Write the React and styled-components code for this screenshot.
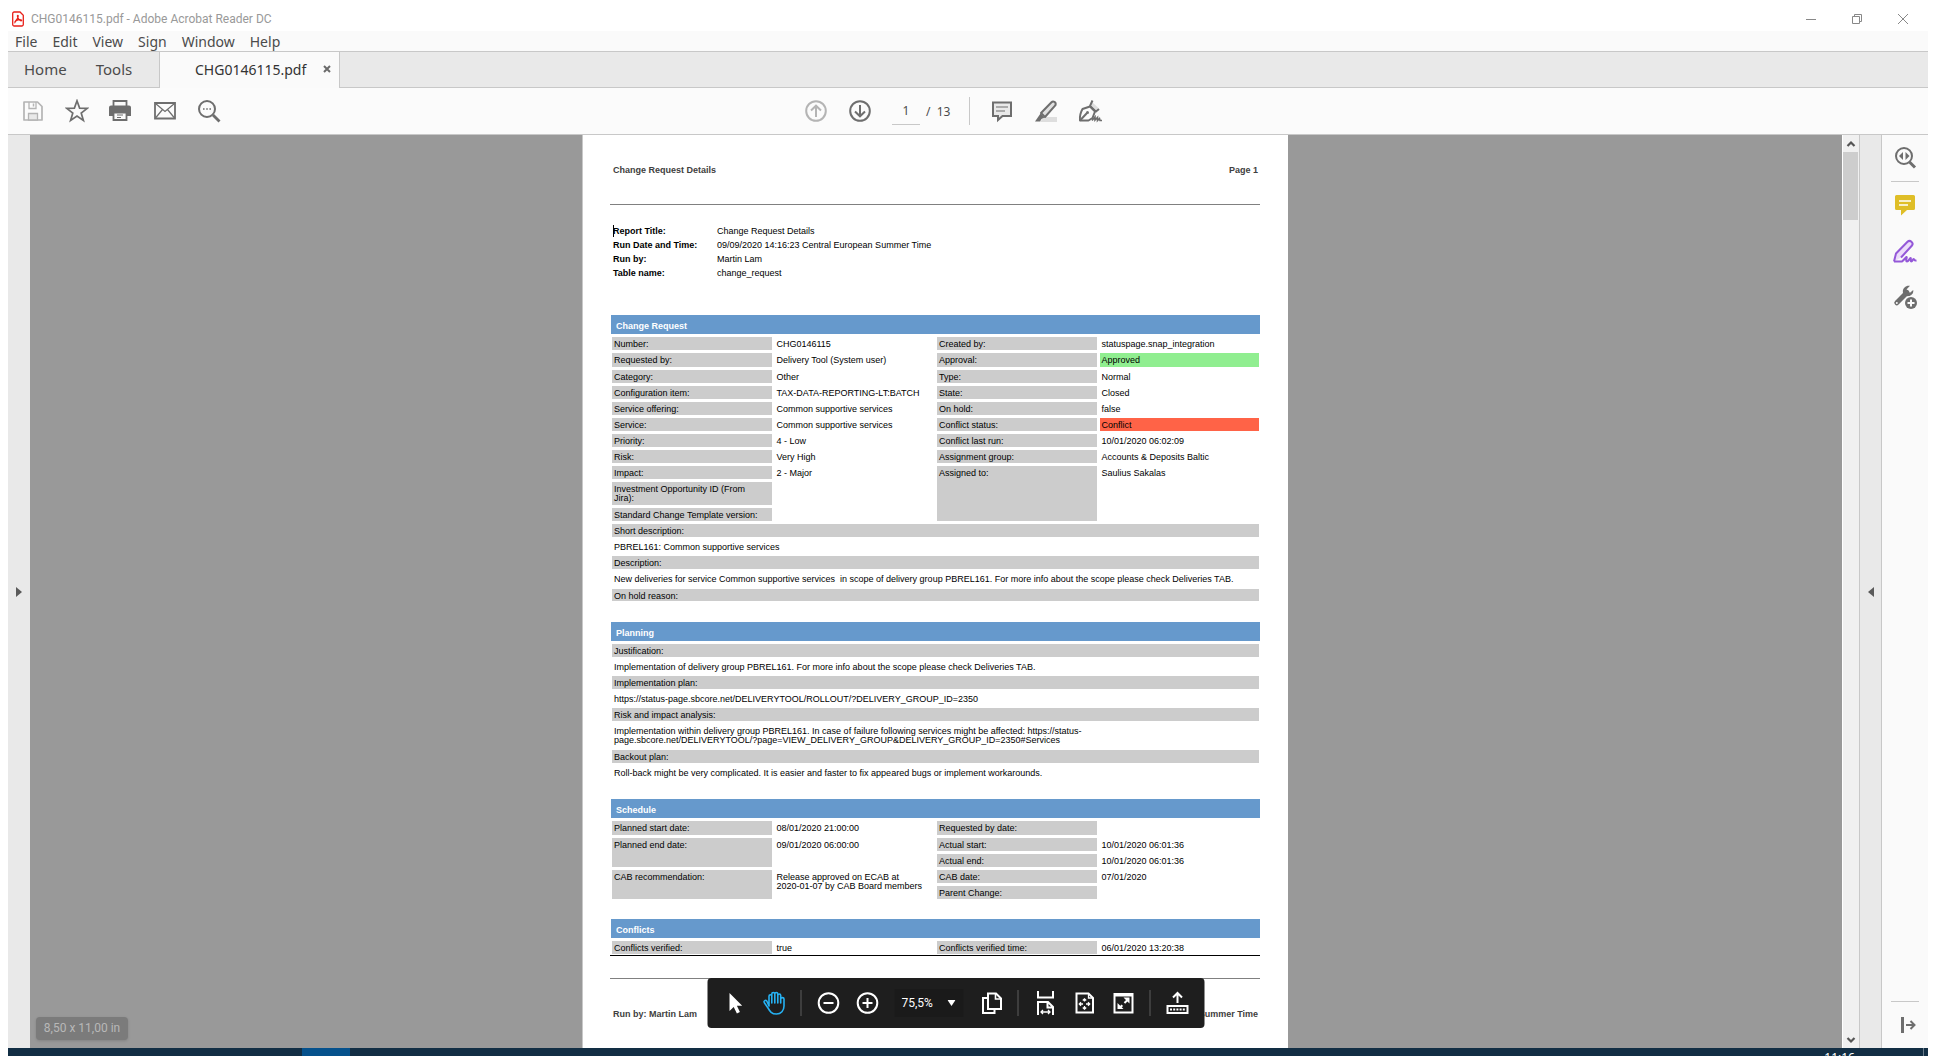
import React from "react";
import styled, { createGlobalStyle } from "styled-components";

const UI = `"Noto Sans", "Open Sans", sans-serif`;
const DOC = `"Liberation Sans", Arial, sans-serif`;
const LINE = "#c8c8c8";
const ICON = "#6e6e6e";

const GlobalStyle = createGlobalStyle`
  *, *::before, *::after { box-sizing: border-box; }
  html, body { margin: 0; background: #fff; }
  body { font-family: ${UI}; }
  button, input, select { font: inherit; color: inherit; }
`;

const Shell = styled.div`
  display: flex;
  flex-direction: column;
  height: 100vh;
  padding: 0 8px;
  overflow: hidden;
`;

const PlainButton = styled.button`
  display: flex;
  align-items: center;
  justify-content: center;
  padding: 0;
  border: 0;
  background: none;
  cursor: pointer;
`;

/* ---------- window chrome ---------- */

const TitleBar = styled.header`
  display: flex;
  align-items: center;
  flex: none;
  height: 31px;
  padding: 6px 2px 0 4px;
  color: #999;
`;

const WindowTitle = styled.h1`
  flex: 1;
  margin: 0 0 0 7px;
  font-family: Roboto, "Open Sans", sans-serif;
  font-size: 12px;
  line-height: 18px;
  font-weight: 400;
`;

const WindowButton = styled(PlainButton)`
  width: 46px;
  height: 24px;
`;

const MenuBar = styled.nav`
  display: flex;
  flex: none;
  gap: 15px;
  height: 21px;
  padding: 1px 7px 0;
  background: #fafafa;
  border-bottom: 1px solid ${LINE};
`;

const MenuItem = styled(PlainButton)`
  font-size: 14px;
  line-height: 20px;
  color: #4b4b4b;
`;

const TabBar = styled.nav`
  display: flex;
  flex: none;
  height: 36px;
  background: #e9e9e9;
`;

const AppTabs = styled.div`
  display: flex;
  gap: 29px;
  width: 152px;
  padding: 0 0 2px 16px;
  border-right: 1px solid ${LINE};
  border-bottom: 1px solid ${LINE};
`;

const AppTab = styled(PlainButton)`
  font-size: 15px;
  color: #4b4b4b;
`;

const DocumentTab = styled.div`
  display: flex;
  align-items: center;
  justify-content: space-between;
  width: 180px;
  padding: 0 8px 2px 35px;
  background: #fafafa;
  border-right: 1px solid ${LINE};
`;

const DocumentTabName = styled(PlainButton)`
  font-size: 14px;
  color: #333;
`;

const TabFiller = styled.div`
  flex: 1;
  border-bottom: 1px solid ${LINE};
`;

/* ---------- toolbar ---------- */

const Toolbar = styled.div`
  display: grid;
  grid-template-columns: 1fr auto 1fr;
  flex: none;
  height: 47px;
  background: #fbfbfb;
  border-bottom: 1px solid ${LINE};
`;

const FileTools = styled.div`
  display: flex;
  align-items: center;
  padding-left: 3px;
`;

const CenterTools = styled.div`
  display: grid;
  grid-template-columns: 175px 173px;
  align-items: center;
`;

const ToolGroup = styled.div`
  display: flex;
  align-items: center;
`;

const MarkupGroup = styled(ToolGroup)`
  height: 28px;
  padding-left: 10px;
  border-left: 1px solid ${LINE};
`;

const ToolButton = styled(PlainButton)`
  width: 44px;
  height: 40px;
  color: ${(p) => (p.disabled ? "#b4b4b4" : ICON)};
`;

const PageInput = styled.input`
  width: 28px;
  height: 28px;
  margin: 0 6px 0 10px;
  padding: 0;
  border: 0;
  border-bottom: 1px solid ${LINE};
  background: none;
  text-align: center;
  font-size: 12px;
  color: #4b4b4b;
`;

const PageTotal = styled.span`
  font-size: 12px;
  color: #4b4b4b;
  white-space: pre;
`;

/* ---------- body ---------- */

const Body = styled.div`
  display: flex;
  flex: 1;
  min-height: 0;
`;

const Gutter = styled(PlainButton)`
  flex: none;
  width: 22px;
  background: #e9e9e9;
  border-left: ${(p) => (p.$lined ? `1px solid ${LINE}` : "0")};
`;

const Viewer = styled.main`
  position: relative;
  display: flex;
  justify-content: center;
  flex: 1;
  padding-right: 2px;
  background: #999;
  overflow: hidden;
`;

const ScrollBar = styled.div`
  display: flex;
  flex-direction: column;
  justify-content: space-between;
  flex: none;
  width: 17px;
  background: #f0f0f0;
  border-left: 1px solid #fff;
`;

const ScrollButton = styled(PlainButton)`
  height: 17px;
`;

const ScrollThumb = styled.div`
  width: 15px;
  height: 68px;
  margin-bottom: auto;
  background: #cdcdcd;
`;

const ToolRail = styled.aside`
  display: flex;
  flex-direction: column;
  flex: none;
  width: 47px;
  background: #fafafa;
  border-left: 1px solid ${LINE};
`;

const RailButton = styled(PlainButton)`
  width: 46px;
  height: 46px;
  color: ${ICON};
`;

const RailDivider = styled.hr`
  width: 28px;
  height: 1px;
  margin: ${(p) => (p.$bottom ? "auto auto 0" : "0 auto")};
  border: 0;
  background: ${LINE};
`;

const SizeBadge = styled.div`
  position: absolute;
  left: 6px;
  bottom: 8px;
  width: 92px;
  border-radius: 4px;
  background: #7b7b7b;
  box-shadow: 0 1px 3px rgba(0, 0, 0, 0.15);
  color: #b8b8b8;
  font-family: Roboto, "Open Sans", sans-serif;
  font-size: 12px;
  line-height: 23px;
  text-align: center;
`;

/* ---------- document ---------- */

const Sheet = styled.article`
  width: 100%;
  max-width: 706px;
  padding: 0 28px 0 27px;
  background: #fff;
  border-left: 1px solid ${LINE};
  font-family: ${DOC};
  font-size: 9px;
  line-height: 13px;
  color: #000;
`;

const RunningHead = styled.div`
  display: flex;
  justify-content: space-between;
  padding: 29px 2px 27px 3px;
  border-bottom: 1px solid #808080;
  font-weight: 700;
  color: #404040;
`;

const RunningFoot = styled(RunningHead)`
  margin-top: 22px;
  border-top: 1px solid #808080;
  border-bottom: 0;
`;

const Facts = styled.dl`
  position: relative;
  display: grid;
  grid-template-columns: 104px 1fr;
  margin: 19px 0 35px 3px;
  line-height: 14px;
`;

const FactName = styled.dt`
  font-weight: 700;
`;

const FactValue = styled.dd`
  margin: 0;
`;

const TextCaret = styled.span`
  position: absolute;
  left: 0;
  top: 1px;
  width: 1px;
  height: 12px;
  background: #000;
`;

const Section = styled.section`
  margin: 0 0 ${(p) => p.$gap}px 1px;
`;

const SectionTitle = styled.h2`
  margin: 0;
  padding: 5px 5px 1px;
  background: #6699cc;
  color: #fff;
  font-size: 9px;
  line-height: 13px;
  font-weight: 700;
`;

const Fields = styled.table`
  width: calc(100% + 4px);
  margin: 0 -2px;
  table-layout: fixed;
  border-collapse: separate;
  border-spacing: 3px;
  line-height: 9px;
`;

const FieldRow = styled.tr`
  height: ${(p) => p.$height}px;
`;

const Label = styled.th`
  padding: 3px 2px 0;
  background: #ccc;
  font-weight: 400;
  text-align: left;
  vertical-align: top;
  white-space: pre-line;
`;

const tones = { approved: "#90ee90", conflict: "#ff6347" };

const Value = styled.td`
  padding: 3px 2px 0;
  background: ${(p) => tones[p.$tone] || "none"};
  vertical-align: top;
  white-space: pre-line;
`;

const EndRule = styled.hr`
  height: 1px;
  margin: 0;
  border: 0;
  background: #000;
`;

/* ---------- floating controls ---------- */

const FloatBar = styled.div`
  position: absolute;
  left: calc(50% + 20px);
  bottom: 20px;
  display: flex;
  align-items: center;
  height: 50px;
  padding: 0 8px;
  border-radius: 4px;
  background: #1e1e1e;
  color: #fff;
  transform: translateX(-50%);
`;

const FloatButton = styled(PlainButton)`
  width: 39px;
  height: 40px;
  color: ${(p) => (p.$active ? "#26b1f2" : "#fff")};
`;

const FloatDivider = styled.span`
  width: 1px;
  height: 26px;
  margin: 0 7px;
  background: #5c5c5c;
`;

const ZoomField = styled.label`
  position: relative;
  display: flex;
  align-items: center;
  width: 69px;
  height: 28px;
  margin: 0 8px;
  background: #1a1a1a;
`;

const ZoomSelect = styled.select`
  width: 100%;
  height: 28px;
  padding: 0 7px;
  border: 0;
  background: none;
  appearance: none;
  font-family: Roboto, "Open Sans", sans-serif;
  font-size: 12px;
`;

const ZoomArrow = styled.svg`
  position: absolute;
  right: 8px;
  top: 11px;
  pointer-events: none;
`;

/* ---------- taskbar ---------- */

const TaskBar = styled.footer`
  display: flex;
  flex: none;
  height: 8px;
  padding: 0 4px 0 294px;
  background: #122e44;
  overflow: hidden;
`;

const TaskTile = styled.span`
  width: 48px;
  background: #05518c;
`;

const Clock = styled.time`
  margin-left: auto;
  padding: 1px 68px 0 0;
  border-right: 1px solid #6a7c8b;
  color: #fff;
  font-size: 12px;
  line-height: 18px;
`;

/* ---------- icons ---------- */

const Icon = ({ size = 24, children, ...rest }) => (
  <svg
    width={size}
    height={size}
    viewBox="0 0 24 24"
    fill="none"
    stroke="currentColor"
    strokeWidth="2"
    aria-hidden="true"
    {...rest}
  >
    {children}
  </svg>
);

const AcrobatIcon = () => (
  <svg width="12" height="16" viewBox="0 0 12 16" fill="none" stroke="#e8211a" aria-hidden="true">
    <path d="M2 1h6l3.3 3.3V13.500a1.500 1.500 0 0 1-1.500 1.500H2.200A1.500 1.500 0 0 1 .7 13.500V2.500A1.500 1.500 0 0 1 2 1z" strokeWidth="1.300" />
    <path d="M2.800 11.500c-.6-1 2-2.300 3-4.800.5-1.300.6-2.400 0-2.400s-.5 1.200.1 2.400c1 2 3 3.600 3.700 2.900.6-.8-1.800-1.200-3.600-.7-1.400.4-2.700 1.500-3.200 2.600z" strokeWidth="1.200" />
  </svg>
);

const SaveIcon = () => (
  <Icon strokeWidth="1.700">
    <path d="M3 3h13.500L21 7.500V21H3z" strokeLinejoin="round" />
    <path d="M8 3v6.500h7V3" strokeWidth="1.300" />
    <path d="M12.500 4.500v3" strokeWidth="1.500" />
    <path d="M7.500 21v-6.500h9V21z" fill="#e9e9e9" strokeWidth="1.300" />
  </Icon>
);
const StarIcon = () => (
  <Icon strokeWidth="1.700">
    <path d="M12 1.800l2.600 7.300 7.700.2-6.100 4.700 2.200 7.400-6.400-4.400-6.400 4.400 2.200-7.400-6.100-4.700 7.700-.2z" />
  </Icon>
);
const PrinterIcon = () => (
  <Icon>
    <path d="M4.500 7V2h13v5" strokeWidth="1.800" />
    <path d="M2 6.500h18a2 2 0 0 1 2 2V17h-4v-4H4v4H0V8.500a2 2 0 0 1 2-2z" fill="currentColor" stroke="none" />
    <path d="M4.500 13.500h13V21h-13z" strokeWidth="1.800" />
    <path d="M8 16h6M8 18.500h4" strokeWidth="1" />
  </Icon>
);
const MailIcon = () => (
  <Icon>
    <path d="M2 4h20v15.500H2z" strokeWidth="1.800" />
    <path d="M2.500 4.500L12 12.500l9.500-8M2.500 19l7-8.500M21.500 19l-7-8.500" strokeWidth="1.200" />
  </Icon>
);
const FindIcon = () => (
  <Icon>
    <circle cx="10" cy="10" r="8" />
    <path d="M16 16l6.500 6.500" strokeWidth="2.800" />
    <path d="M6 10h1.600M9.200 10h1.600M12.400 10H14" strokeWidth="1.700" />
  </Icon>
);
const ArrowCircle = ({ down }) => (
  <Icon>
    <circle cx="12" cy="12" r="9.800" />
    {down ? (
      <path d="M12 6v11M7 12.500l5 4.800 5-4.800" />
    ) : (
      <path d="M12 18V7M7 11.500l5-4.800 5 4.800" />
    )}
  </Icon>
);
const CommentIcon = () => (
  <Icon>
    <path d="M3 3.500h18v13.500h-8.500l-4.500 4v-4H3z" fill="#e9e9e9" />
    <path d="M6 8h12M6 12h9" strokeWidth="1.200" />
  </Icon>
);
const HighlightIcon = () => (
  <Icon>
    <path d="M10 18h13v5H6z" fill="#dedede" stroke="none" />
    <path d="M7 14L17.500 3.200c1.500-1.500 5-.5 4 3L11 18z" fill="#e0e0e0" strokeLinejoin="round" />
    <path d="M6.500 14.500l4 4-3 1.500-1.500 2.500H1z" fill="currentColor" stroke="none" />
  </Icon>
);
const InkPenIcon = () => (
  <Icon>
    <path d="M14.500 3.500l6 5.500-2 2-5-4z" fill="#dedede" stroke="none" />
    <path d="M2 21.500c-.5-4.500.5-8 2.500-11.500l7.500-2.500 5 5-2.500 6.500-4 2.500z" strokeLinejoin="round" />
    <path d="M2 21.500l7-7.500M12 7l2.500-5.500M11.500 6.500l6.500 6 3-2.500" />
    <circle cx="9.500" cy="13.500" r="1.500" fill="currentColor" stroke="none" />
    <path d="M14 21.500l3-3.500v3l2.500-2.500v3l2-2 .5 2h2" strokeWidth="1.600" />
  </Icon>
);
const CompareIcon = () => (
  <Icon>
    <circle cx="11" cy="10" r="8" />
    <path d="M16.500 16l5.500 5.500" strokeWidth="3" />
    <path d="M10 6v8l-4-4zM12.500 6v8l4-4z" fill="currentColor" stroke="none" />
  </Icon>
);
const RailCommentIcon = () => (
  <Icon stroke="none">
    <path d="M3.500 2h17A1.500 1.500 0 0 1 22 3.500v12a1.500 1.500 0 0 1-1.500 1.500H14l-6 5.500V17H3.500A1.500 1.500 0 0 1 2 15.500v-12A1.500 1.500 0 0 1 3.500 2z" fill="#dfbe27" />
    <path d="M6 8h12M6 12h9" stroke="#fff" strokeWidth="1.600" />
  </Icon>
);
const RailSignIcon = () => (
  <Icon stroke="#9458d8">
    <path d="M1 22.500l2-8L14.500 2.800c2.500-2.500 6.500 1 4.500 3.700L8 18.500" fill="#ecdcfa" strokeLinejoin="round" />
    <path d="M1 22.500h8c2-1.500 3.500-4 4.500-4.500 1 0-1.500 4.500.5 4.500s2.500-3.500 3.500-3.500-.5 3.500.8 3.500 1.700-3 2.500-2.500.2 2 2.700 1.500" />
  </Icon>
);
const RailToolsIcon = () => (
  <Icon>
    <path d="M3.800 17.800L14 7.500" strokeWidth="5" strokeLinecap="round" />
    <path d="M17 .8c-4-1-8 2.500-7 7 .8 3.200 5 4.500 8 2.500 1.800-1.200 2.600-3 2.200-5.300l-3.200 2.700-2.700-.7-.6-2.700z" fill="currentColor" stroke="none" />
    <circle cx="3.800" cy="18" r="1" fill="#fafafa" stroke="none" />
    <circle cx="18" cy="18" r="7.200" fill="#fafafa" stroke="none" />
    <circle cx="18" cy="18" r="6" fill="currentColor" stroke="none" />
    <path d="M18 14.500v7M14.500 18h7" stroke="#fafafa" />
  </Icon>
);
const CollapseIcon = () => (
  <Icon>
    <path d="M9.500 4v16" strokeWidth="3" />
    <path d="M13 12h9M17.500 8l4 4-4 4" strokeWidth="2" />
  </Icon>
);
const CursorIcon = () => (
  <Icon stroke="none">
    <path d="M6 2v18l4.200-4 3.200 6.500 3-1.500-3-6.200h5.300z" fill="currentColor" />
  </Icon>
);
const HandIcon = () => (
  <Icon strokeWidth="1.600" strokeLinecap="round" strokeLinejoin="round">
    <path d="M6.500 15V5.200c0-2 2.800-2 2.800 0V12V3c0-2 3-2 3 0v9V3c0-2 3-2 3 0v9V4.500c0-2 2.900-2 2.900 0V12V8c0-1.800 3.300-1.800 3.300 0v7c0 4.500-3 8-7.500 8-5 0-6.500-2.500-8.500-6L1.700 11.500c-.8-1.700 1.300-2.900 2.600-1.500z" />
  </Icon>
);
const ZoomCircle = ({ plus }) => (
  <Icon>
    <circle cx="12" cy="12" r="9.800" />
    <path d={plus ? "M7 12h10M12 7v10" : "M7 12h10"} />
  </Icon>
);
const PagesIcon = () => (
  <Icon>
    <path d="M8.500 2.500h8l5 5V18h-13z" />
    <path d="M16 2.500V8h5.500" strokeWidth="1.600" />
    <path d="M8 7H3.500v15H15v-4" />
  </Icon>
);
const FitWidthIcon = () => (
  <Icon>
    <path d="M4.500 0v6.500h15V0" />
    <path d="M4.500 24V11h10l5 5v8M14 11v5.500h5.500" />
    <path d="M7.500 21h9M9.500 19l-2 2 2 2M14.500 19l2 2-2 2" strokeWidth="1.300" />
  </Icon>
);
const FitPageIcon = () => (
  <Icon>
    <path d="M4 2.500h12l4.500 4.500v14.500H4z" />
    <path d="M16 2.500V7h4.500" strokeWidth="1.300" />
    <path d="M12 8v2.500M12 15v3M7.500 13h3M13.500 13h3M10.300 9.500L12 7.800l1.700 1.700M10.300 16.500l1.700 1.700 1.700-1.700M8.500 11.300L6.800 13l1.700 1.700M15.500 11.300l1.700 1.700-1.700 1.700" strokeWidth="1.300" />
  </Icon>
);
const FullScreenIcon = () => (
  <Icon>
    <path d="M3 3h18v18.500H3z" />
    <path d="M3 4h18" strokeWidth="3" />
    <path d="M8 17l8-8" strokeDasharray="4 3" />
    <path d="M12 6.500h6v6zM6 12v6h6z" fill="currentColor" stroke="none" />
  </Icon>
);
const KeyboardIcon = () => (
  <Icon>
    <path d="M12 12V2.500M7.500 6.500L12 2l4.500 4.500" />
    <path d="M2 15h20v7H2z" />
    <path d="M4.500 18.500h15" strokeDasharray="2 1.200" />
  </Icon>
);

const Triangle = ({ left }) => (
  <svg width="6" height="10" viewBox="0 0 6 10" fill="#5a5a5a" aria-hidden="true">
    <path d={left ? "M6 0v10L0 5z" : "M0 0v10l6-5z"} />
  </svg>
);
const Chevron = ({ down }) => (
  <svg width="10" height="8" viewBox="0 0 10 8" fill="none" stroke="#555" strokeWidth="2.200" aria-hidden="true">
    <path d={down ? "M1.500 2L5 5.500 8.500 2" : "M1.500 6L5 2.500 8.500 6"} />
  </svg>
);

/* ---------- data ---------- */

const label = (text, span = {}) => ({ kind: "label", text, ...span });
const value = (text, span = {}) => ({ kind: "value", text, ...span });
const pair = (a, b, c, d, tone) => [label(a), value(b), label(c), value(d, { tone })];
const wide = { colSpan: 4 };

const facts = [
  ["Report Title:", "Change Request Details"],
  ["Run Date and Time:", "09/09/2020 14:16:23 Central European Summer Time"],
  ["Run by:", "Martin Lam"],
  ["Table name:", "change_request"],
];

const sections = [
  {
    title: "Change Request",
    gap: 18,
    rows: [
      { cells: pair("Number:", "CHG0146115", "Created by:", "statuspage.snap_integration") },
      { height: 14, cells: pair("Requested by:", "Delivery Tool (System user)", "Approval:", "Approved", "approved") },
      { cells: pair("Category:", "Other", "Type:", "Normal") },
      { cells: pair("Configuration item:", "TAX-DATA-REPORTING-LT:BATCH", "State:", "Closed") },
      { cells: pair("Service offering:", "Common supportive services", "On hold:", "false") },
      { cells: pair("Service:", "Common supportive services", "Conflict status:", "Conflict", "conflict") },
      { cells: pair("Priority:", "4 - Low", "Conflict last run:", "10/01/2020 06:02:09") },
      { cells: pair("Risk:", "Very High", "Assignment group:", "Accounts & Deposits Baltic") },
      {
        cells: [
          label("Impact:"),
          value("2 - Major"),
          label("Assigned to:", { rowSpan: 3 }),
          value("Saulius Sakalas", { rowSpan: 3 }),
        ],
      },
      { height: 23, cells: [label("Investment Opportunity ID (From\nJira):"), value("")] },
      { cells: [label("Standard Change Template version:"), value("")] },
      { cells: [label("Short description:", wide)] },
      { cells: [value("PBREL161: Common supportive services", wide)] },
      { cells: [label("Description:", wide)] },
      {
        height: 14,
        cells: [
          value(
            "New deliveries for service Common supportive services\u00a0 in scope of delivery group PBREL161. For more info about the scope please check Deliveries TAB.",
            wide
          ),
        ],
      },
      { height: 12, cells: [label("On hold reason:", wide)] },
    ],
  },
  {
    title: "Planning",
    gap: 17,
    rows: [
      { cells: [label("Justification:", wide)] },
      {
        cells: [
          value(
            "Implementation of delivery group PBREL161. For more info about the scope please check Deliveries TAB.",
            wide
          ),
        ],
      },
      { cells: [label("Implementation plan:", wide)] },
      { cells: [value("https://status-page.sbcore.net/DELIVERYTOOL/ROLLOUT/?DELIVERY_GROUP_ID=2350", wide)] },
      { cells: [label("Risk and impact analysis:", wide)] },
      {
        height: 23,
        cells: [
          value(
            "Implementation within delivery group PBREL161. In case of failure following services might be affected: https://status-\npage.sbcore.net/DELIVERYTOOL/?page=VIEW_DELIVERY_GROUP&DELIVERY_GROUP_ID=2350#Services",
            wide
          ),
        ],
      },
      { cells: [label("Backout plan:", wide)] },
      {
        cells: [
          value(
            "Roll-back might be very complicated. It is easier and faster to fix appeared bugs or implement workarounds.",
            wide
          ),
        ],
      },
    ],
  },
  {
    title: "Schedule",
    gap: 17,
    rows: [
      { height: 14, cells: pair("Planned start date:", "08/01/2020 21:00:00", "Requested by date:", "") },
      {
        cells: [
          label("Planned end date:", { rowSpan: 2 }),
          value("09/01/2020 06:00:00", { rowSpan: 2 }),
          label("Actual start:"),
          value("10/01/2020 06:01:36"),
        ],
      },
      { cells: [label("Actual end:"), value("10/01/2020 06:01:36")] },
      {
        cells: [
          label("CAB recommendation:", { rowSpan: 2 }),
          value("Release approved on ECAB at\n2020-01-07 by CAB Board members", { rowSpan: 2 }),
          label("CAB date:"),
          value("07/01/2020"),
        ],
      },
      { cells: [label("Parent Change:"), value("")] },
    ],
  },
  {
    title: "Conflicts",
    gap: -2,
    rows: [{ cells: pair("Conflicts verified:", "true", "Conflicts verified time:", "06/01/2020 13:20:38") }],
  },
];

function FieldSection({ title, rows, gap }) {
  return (
    <Section $gap={gap}>
      <SectionTitle>{title}</SectionTitle>
      <Fields>
        <colgroup>
          <col />
          <col />
          <col />
          <col />
        </colgroup>
        <tbody>
          {rows.map((row, r) => (
            <FieldRow key={r} $height={row.height || 13}>
              {row.cells.map(({ kind, text, tone, colSpan, rowSpan }, c) =>
                kind === "label" ? (
                  <Label key={c} colSpan={colSpan} rowSpan={rowSpan}>{text}</Label>
                ) : (
                  <Value key={c} colSpan={colSpan} rowSpan={rowSpan} $tone={tone}>{text}</Value>
                )
              )}
            </FieldRow>
          ))}
        </tbody>
      </Fields>
    </Section>
  );
}

const menus = ["File", "Edit", "View", "Sign", "Window", "Help"];

export default function App() {
  return (
    <Shell>
      <GlobalStyle />
      <TitleBar>
        <AcrobatIcon />
        <WindowTitle>CHG0146115.pdf - Adobe Acrobat Reader DC</WindowTitle>
        <WindowButton aria-label="Minimize">
          <svg width="10" height="10" stroke="#888"><path d="M0 5.500h10" /></svg>
        </WindowButton>
        <WindowButton aria-label="Restore">
          <svg width="10" height="10" fill="none" stroke="#888"><path d="M.5 2.500h7v7h-7zM2.500 2.500v-2h7v7h-2" /></svg>
        </WindowButton>
        <WindowButton aria-label="Close">
          <svg width="10" height="10" stroke="#888"><path d="M0 0l10 10M10 0L0 10" /></svg>
        </WindowButton>
      </TitleBar>

      <MenuBar aria-label="Menu">
        {menus.map((name) => (
          <MenuItem key={name}>{name}</MenuItem>
        ))}
      </MenuBar>

      <TabBar aria-label="Tabs">
        <AppTabs>
          <AppTab>Home</AppTab>
          <AppTab>Tools</AppTab>
        </AppTabs>
        <DocumentTab>
          <DocumentTabName>CHG0146115.pdf</DocumentTabName>
          <PlainButton aria-label="Close tab">
            <svg width="8" height="8" stroke="#6a6a6a" strokeWidth="2"><path d="M1 1l6 6M7 1L1 7" /></svg>
          </PlainButton>
        </DocumentTab>
        <TabFiller />
      </TabBar>

      <Toolbar>
        <FileTools>
          <ToolButton disabled aria-label="Save"><SaveIcon /></ToolButton>
          <ToolButton aria-label="Star"><StarIcon /></ToolButton>
          <ToolButton aria-label="Print"><PrinterIcon /></ToolButton>
          <ToolButton aria-label="Email"><MailIcon /></ToolButton>
          <ToolButton aria-label="Find"><FindIcon /></ToolButton>
        </FileTools>
        <CenterTools>
          <ToolGroup>
            <ToolButton disabled aria-label="Previous page"><ArrowCircle /></ToolButton>
            <ToolButton aria-label="Next page"><ArrowCircle down /></ToolButton>
            <PageInput aria-label="Page number" defaultValue="1" />
            <PageTotal>/  13</PageTotal>
          </ToolGroup>
          <MarkupGroup>
            <ToolButton aria-label="Add comment"><CommentIcon /></ToolButton>
            <ToolButton aria-label="Highlight"><HighlightIcon /></ToolButton>
            <ToolButton aria-label="Sign"><InkPenIcon /></ToolButton>
          </MarkupGroup>
        </CenterTools>
      </Toolbar>

      <Body>
        <Gutter aria-label="Open navigation pane"><Triangle /></Gutter>
        <Viewer>
          <Sheet>
            <RunningHead>
              <span>Change Request Details</span>
              <span>Page 1</span>
            </RunningHead>
            <Facts>
              <TextCaret />
              {facts.map(([name, text]) => (
                <React.Fragment key={name}>
                  <FactName>{name}</FactName>
                  <FactValue>{text}</FactValue>
                </React.Fragment>
              ))}
            </Facts>
            {sections.map((section) => (
              <FieldSection key={section.title} {...section} />
            ))}
            <EndRule />
            <RunningFoot>
              <span>Run by: Martin Lam</span>
              <span>09/09/2020 14:16:23 Central European Summer Time</span>
            </RunningFoot>
          </Sheet>

          <SizeBadge>8,50 x 11,00 in</SizeBadge>

          <FloatBar role="toolbar" aria-label="Page controls">
            <FloatButton aria-label="Select"><CursorIcon /></FloatButton>
            <FloatButton $active aria-label="Pan"><HandIcon /></FloatButton>
            <FloatDivider />
            <FloatButton aria-label="Zoom out"><ZoomCircle /></FloatButton>
            <FloatButton aria-label="Zoom in"><ZoomCircle plus /></FloatButton>
            <ZoomField>
              <ZoomSelect aria-label="Zoom level" defaultValue="75,5%">
                <option>75,5%</option>
              </ZoomSelect>
              <ZoomArrow width="8" height="6" fill="#fff"><path d="M0 0h8L4 6z" /></ZoomArrow>
            </ZoomField>
            <FloatButton aria-label="Page display"><PagesIcon /></FloatButton>
            <FloatDivider />
            <FloatButton aria-label="Fit width"><FitWidthIcon /></FloatButton>
            <FloatButton aria-label="Fit page"><FitPageIcon /></FloatButton>
            <FloatButton aria-label="Full screen"><FullScreenIcon /></FloatButton>
            <FloatDivider />
            <FloatButton aria-label="Dock toolbar"><KeyboardIcon /></FloatButton>
          </FloatBar>
        </Viewer>
        <ScrollBar>
          <ScrollButton aria-label="Scroll up"><Chevron /></ScrollButton>
          <ScrollThumb />
          <ScrollButton aria-label="Scroll down"><Chevron down /></ScrollButton>
        </ScrollBar>
        <Gutter $lined aria-label="Close tools pane"><Triangle left /></Gutter>
        <ToolRail>
          <RailButton aria-label="Search tools"><CompareIcon /></RailButton>
          <RailDivider />
          <RailButton aria-label="Comment"><RailCommentIcon /></RailButton>
          <RailButton aria-label="Fill and sign"><RailSignIcon /></RailButton>
          <RailButton aria-label="More tools"><RailToolsIcon /></RailButton>
          <RailDivider $bottom />
          <RailButton aria-label="Expand pane"><CollapseIcon /></RailButton>
        </ToolRail>
      </Body>

      <TaskBar>
        <TaskTile />
        <Clock>11:16</Clock>
      </TaskBar>
    </Shell>
  );
}
